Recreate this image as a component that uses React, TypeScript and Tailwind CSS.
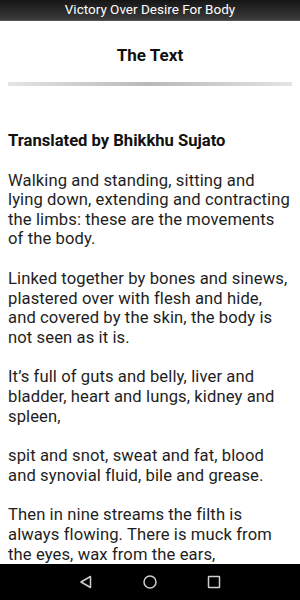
import React from 'react';

const paragraphs: string[][] = [
  [
    'Walking and standing, sitting and',
    'lying down, extending and contracting',
    'the limbs: these are the movements',
    'of the body.',
  ],
  [
    'Linked together by bones and sinews,',
    'plastered over with flesh and hide,',
    'and covered by the skin, the body is',
    'not seen as it is.',
  ],
  ['It\u2019s full of guts and belly, liver and', 'bladder, heart and lungs, kidney and', 'spleen,'],
  ['spit and snot, sweat and fat, blood', 'and synovial fluid, bile and grease.'],
  ['Then in nine streams the filth is', 'always flowing. There is muck from', 'the eyes, wax from the ears,'],
];

export default function App() {
  return (
    <div className="w-[300px] h-[600px] flex flex-col bg-white overflow-hidden font-['Roboto',sans-serif]">
      <div className="h-[21px] shrink-0 flex items-center justify-center bg-gradient-to-b from-[#161616] to-[#3c3c3c] border-b border-[#555] text-white text-[13.5px] leading-none">
        Victory Over Desire For Body
      </div>

      <div className="flex-1 overflow-hidden">
        <h1 className="mt-[23px] text-center text-[17px] font-bold text-[#111] leading-[22px]">The Text</h1>
        <div className="mx-[8px] mt-[16px] h-[4px] bg-gradient-to-r from-[#e4e4e4] via-[#b9b9b9] to-[#e4e4e4]" />

        <div className="px-[8px] mt-[45px] text-[16.6px] leading-[19.6px] text-[#1e1e1e]">
          <p className="font-bold text-[#111]">Translated by Bhikkhu Sujato</p>
          {paragraphs.map((lines) => (
            <p key={lines[0]} className="mt-[20px] tracking-[0.1px]">
              {lines.map((l) => (
                <span key={l} className="block whitespace-nowrap">
                  {l}
                </span>
              ))}
            </p>
          ))}
        </div>
      </div>

      <div className="h-[36px] shrink-0 bg-black flex items-center justify-center gap-[50px]">
        <svg width="14" height="14" viewBox="0 0 14 14" fill="none" stroke="#cfcfcf" strokeWidth="1.5">
          <path d="M11.5 1.5 L2 7 L11.5 12.5 Z" strokeLinejoin="round" />
        </svg>
        <svg width="14" height="14" viewBox="0 0 14 14" fill="none" stroke="#cfcfcf" strokeWidth="1.5">
          <circle cx="7" cy="7" r="6" />
        </svg>
        <svg width="14" height="14" viewBox="0 0 14 14" fill="none" stroke="#cfcfcf" strokeWidth="1.5">
          <rect x="1.5" y="1.5" width="11" height="11" rx="0.5" />
        </svg>
      </div>
    </div>
  );
}
